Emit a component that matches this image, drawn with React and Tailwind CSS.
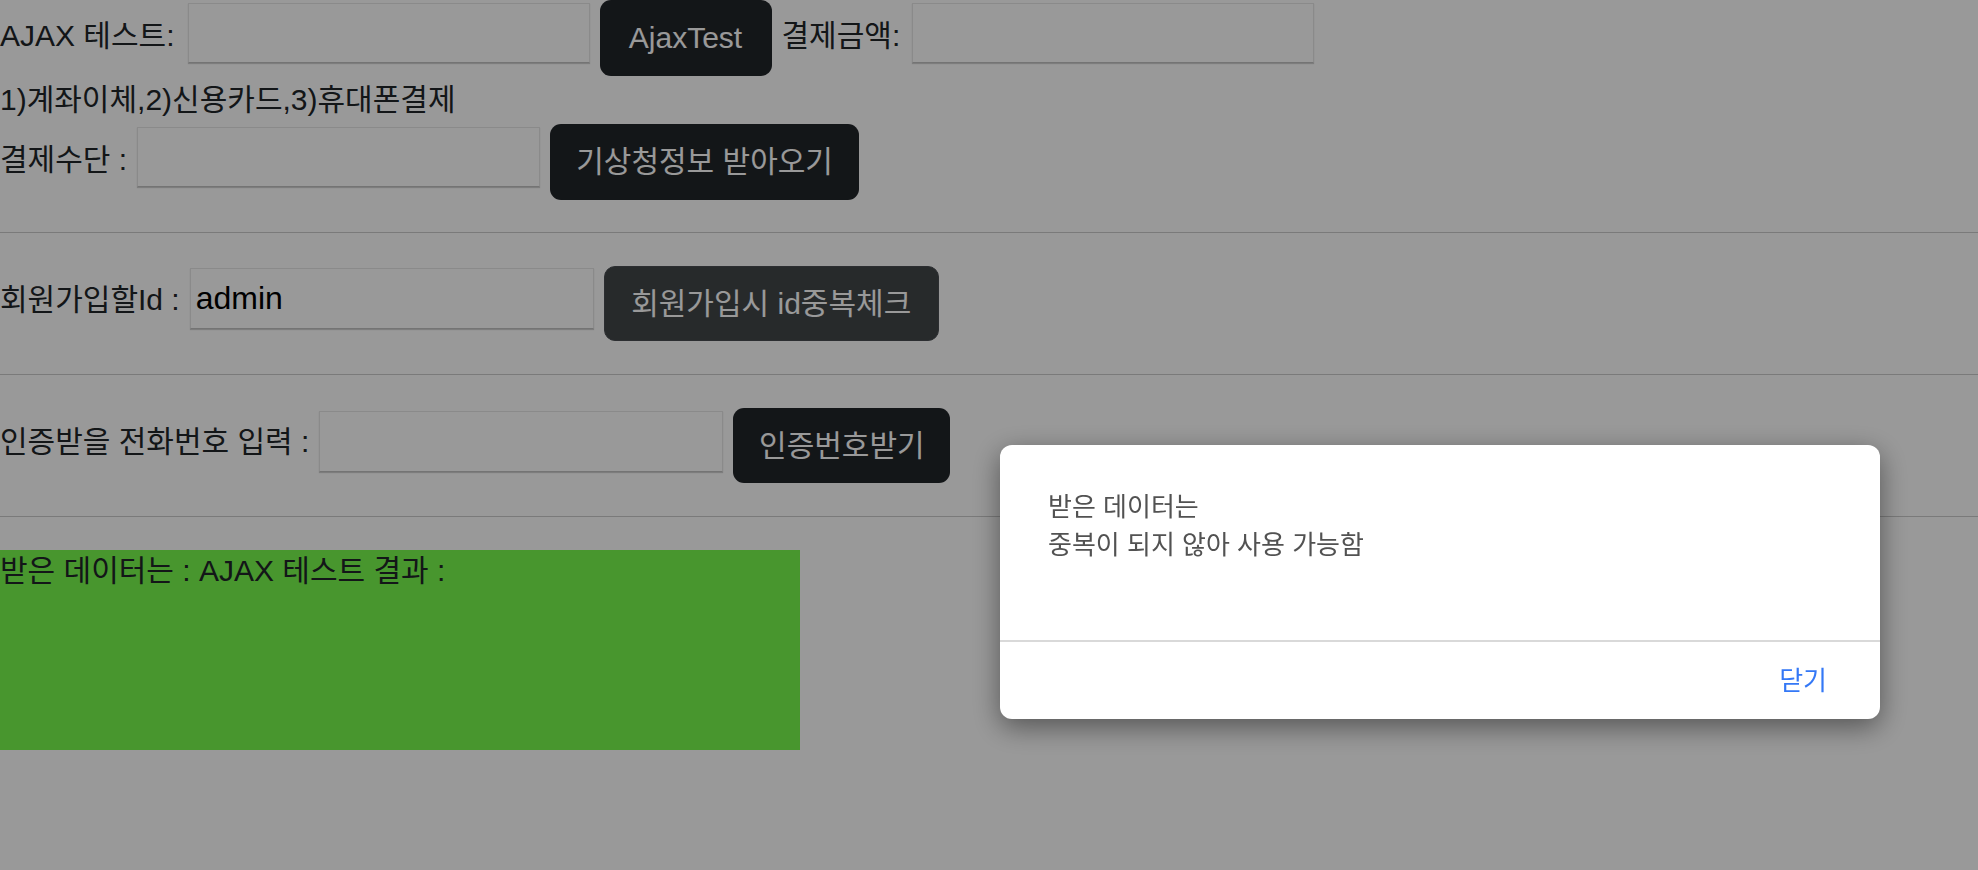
import React from 'react';

const font = "font-['Liberation_Sans','Noto_Sans_CJK_KR',sans-serif]";

function Input({ className = '', defaultValue }) {
    return (
        <input
            type="text"
            defaultValue={defaultValue}
            className={`h-[60px] bg-white border border-[#e6e6e6] border-b-[#c2c2c2] shadow-[0_1px_1px_rgba(0,0,0,0.18)] px-[5px] text-[32px] text-black outline-none ${className}`}
        />
    );
}

function Btn({ className = '', children }) {
    return (
        <button className={`h-[76px] rounded-[11px] text-white text-[30px] leading-[42px] text-center shrink-0 ${className}`}>
            {children}
        </button>
    );
}

export default function App() {
    return (
        <div className={`relative min-h-screen bg-white text-[#212529] text-[30px] leading-[42px] ${font}`}>
            <div className="flex items-start gap-[10px] h-[76px]">
                <span className="mt-[15px] pr-[3px]">AJAX 테스트:</span>
                <Input className="w-[402px] mt-[3px]" />
                <Btn className="w-[172px] bg-[#212529]">AjaxTest</Btn>
                <span className="mt-[15px] pr-[2px]">결제금액:</span>
                <Input className="w-[402px] mt-[3px]" />
            </div>
            <p className="mt-[3px]">1)계좌이체,2)신용카드,3)휴대폰결제</p>
            <div className="mt-[3px] flex items-start gap-[10px]">
                <span className="mt-[15px]">결제수단 :</span>
                <Input className="w-[403px] mt-[3px]" />
                <Btn className="w-[309px] bg-[#212529]">기상청정보 받아오기</Btn>
            </div>

            <hr className="mt-[32px] border-t border-[#cccccc]" />

            <div className="mt-[33px] flex items-start gap-[10px]">
                <span className="mt-[13px]">회원가입할Id :</span>
                <Input className="w-[404px] mt-[2px] h-[61px]" defaultValue="admin" />
                <Btn className="w-[335px] !h-[75px] bg-[#424649] border border-[#4a4e52]">회원가입시 id중복체크</Btn>
            </div>

            <hr className="mt-[33px] border-t border-[#cccccc]" />

            <div className="mt-[33px] flex items-start gap-[10px]">
                <span className="mt-[13px]">인증받을 전화번호 입력 :</span>
                <Input className="w-[404px] mt-[3px] h-[61px]" />
                <Btn className="w-[217px] !h-[75px] bg-[#212529]">인증번호받기</Btn>
            </div>

            <hr className="mt-[33px] border-t border-[#cccccc]" />

            <div className="mt-[33px] w-[800px] h-[200px] bg-[#78fb4d] text-[#212529]">
                받은 데이터는 : AJAX 테스트 결과 :
            </div>

            <div className="fixed inset-0 bg-black/40" />

            <div className="fixed left-[1000px] top-[445px] w-[880px] h-[274px] rounded-[12px] bg-white flex flex-col shadow-[0_8px_28px_rgba(0,0,0,0.45)] text-[26px] leading-[38px]">
                <div className="flex-1 pl-[48px] pt-[43px] text-[#525252]">
                    <p>받은 데이터는</p>
                    <p>중복이 되지 않아 사용 가능함</p>
                </div>
                <div className="h-[2px] bg-[#d9d9d9]" />
                <div className="h-[77px] flex items-center justify-end pr-[53px]">
                    <button className="text-[#3478f6] text-[26px]">닫기</button>
                </div>
            </div>
        </div>
    );
}
